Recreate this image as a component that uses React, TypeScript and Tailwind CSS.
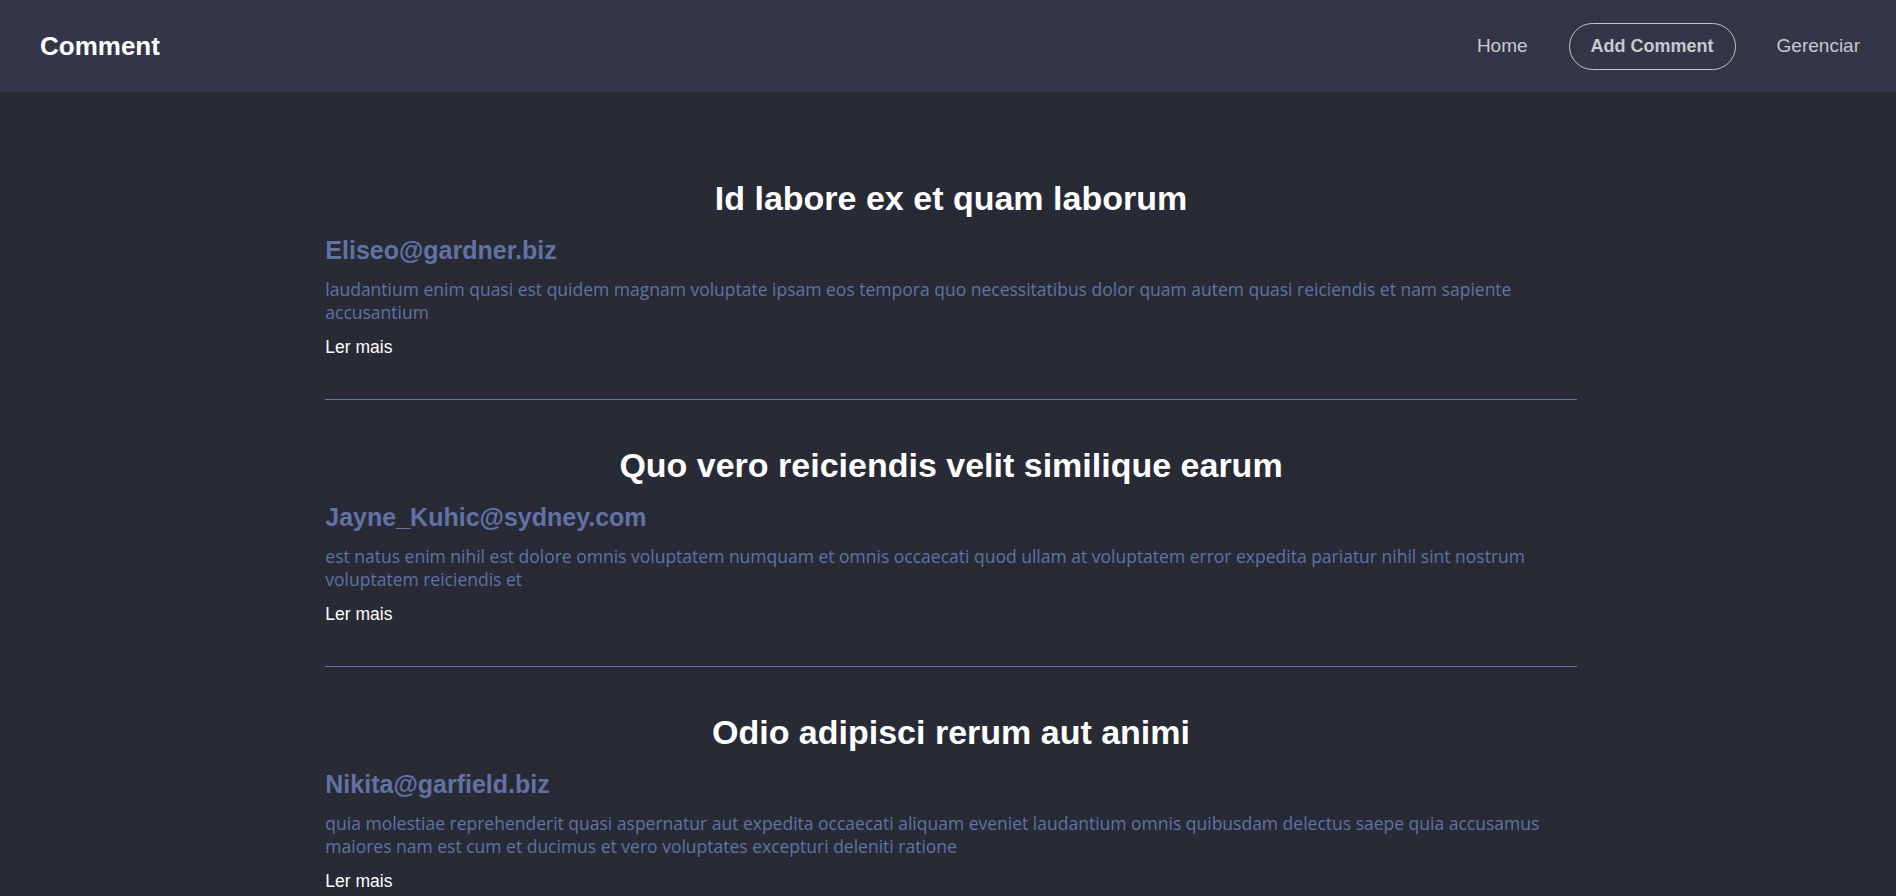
import React from 'react';

const comments = [
  {
    title: 'Id labore ex et quam laborum',
    email: 'Eliseo@gardner.biz',
    body: 'laudantium enim quasi est quidem magnam voluptate ipsam eos tempora quo necessitatibus dolor quam autem quasi reiciendis et nam sapiente accusantium',
  },
  {
    title: 'Quo vero reiciendis velit similique earum',
    email: 'Jayne_Kuhic@sydney.com',
    body: 'est natus enim nihil est dolore omnis voluptatem numquam et omnis occaecati quod ullam at voluptatem error expedita pariatur nihil sint nostrum voluptatem reiciendis et',
  },
  {
    title: 'Odio adipisci rerum aut animi',
    email: 'Nikita@garfield.biz',
    body: 'quia molestiae reprehenderit quasi aspernatur aut expedita occaecati aliquam eveniet laudantium omnis quibusdam delectus saepe quia accusamus maiores nam est cum et ducimus et vero voluptates excepturi deleniti ratione',
  },
];

function Header() {
  return (
    <header className="h-[92px] bg-[#343546] flex items-center justify-between pl-10 pr-9">
      <a href="#" className="text-[26px] font-bold text-white">Comment</a>
      <nav className="flex items-center gap-[41px] text-[19px] text-[#c9c9d1]">
        <a href="#">Home</a>
        <a href="#" className="h-[47px] px-[21px] flex items-center rounded-full border border-[#c4c4cc] text-[18px] font-bold">
          Add Comment
        </a>
        <a href="#">Gerenciar</a>
      </nav>
    </header>
  );
}

export default function App() {
  return (
    <div className="min-h-screen bg-[#282a36] font-['Liberation_Sans',Arial,sans-serif]">
      <Header />
      <main className="w-[66%] mx-auto pt-[86px] pb-10 relative left-[3px]">
        {comments.map((c, i) => (
          <article key={i} className="border-b border-[#6272a4] pb-[40px] mb-[45px]">
            <h1 className="text-center text-[34px] leading-[40px] font-bold text-white">{c.title}</h1>
            <h2 className="mt-[18px] text-[25px] leading-[28px] font-bold text-[#6272a4]">{c.email}</h2>
            <p className="mt-[14px] font-['Open_Sans',sans-serif] text-[17.5px] leading-[23px] text-[#6272a4]">{c.body}</p>
            <a href="#" className="block mt-[12px] text-[17.5px] leading-[23px] text-white">Ler mais</a>
          </article>
        ))}
      </main>
    </div>
  );
}
